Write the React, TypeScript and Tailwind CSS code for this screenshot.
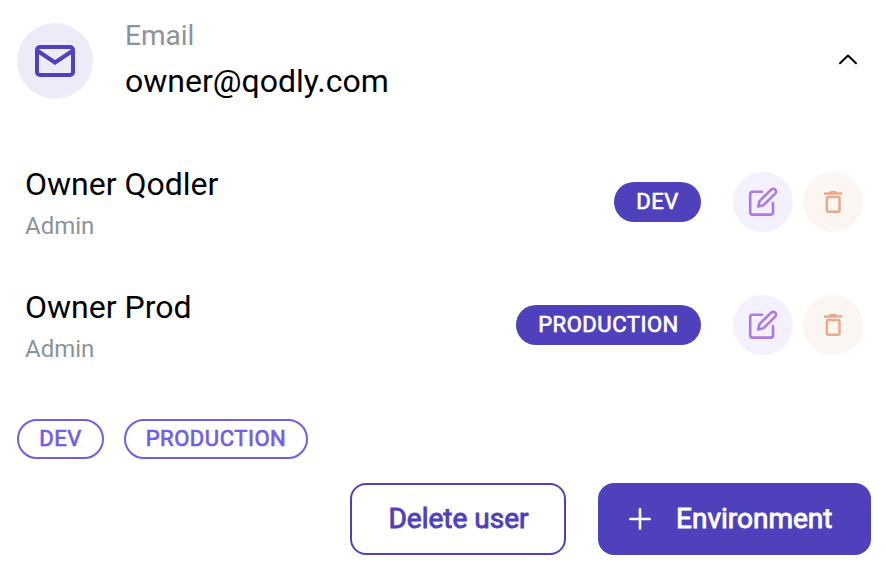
const Edit = () => (
  <div className="flex size-[60px] items-center justify-center rounded-full bg-[#f5f0fd]">
    <svg width="30" height="30" viewBox="0 0 30 30" fill="none" stroke="#ab7be0" strokeWidth="2.6" strokeLinecap="round" strokeLinejoin="round">
      <path d="M14 4.8H4.2A2 2 0 0 0 2.2 6.8V25.6A2 2 0 0 0 4.2 27.6H23A2 2 0 0 0 25 25.6V16" />
      <path d="M10.2 19.5L11.5 14.1L23.2 2.6A2.5 2.5 0 0 1 27.2 6.6L15.6 18.2Z" />
    </svg>
  </div>
);

const Trash = () => (
  <div className="flex size-[60px] items-center justify-center rounded-full bg-[#fcf6f2]">
    <svg width="24" height="24" viewBox="0 0 24 24" fill="none" stroke="#e8aa8e" strokeWidth="2.5" strokeLinejoin="round">
      <path d="M3 3.6H21M8.5 2.2H15.5" />
      <rect x="5.9" y="7.1" width="12.6" height="14.6" rx="1.2" />
    </svg>
  </div>
);

function Row({ name, env, pill }: { name: string; env: string; pill: string }) {
  return (
    <div className="flex h-[123px] items-start pl-[25px] pr-[23px]">
      <div className="flex-1">
        <div className="h-[38px] text-[32px] leading-[38px] text-black">{name}</div>
        <div className="mt-[9px] text-[24px] leading-[28px] text-[#8c939b]">Admin</div>
      </div>
      <div className="mt-[7px] flex items-center">
        <span className={`mr-[32px] flex h-10 items-center justify-center rounded-full bg-[#4f41bb] pb-[2px] text-[22px] tracking-[0.55px] text-white [-webkit-text-stroke:0.7px] ${pill}`}>{env}</span>
        <Edit />
        <div className="w-[10px]" />
        <Trash />
      </div>
    </div>
  );
}

export default function App() {
  return (
    <main className="flex h-[572px] w-[886px] flex-col overflow-hidden bg-white font-[Roboto,sans-serif]">
      <header className="flex h-[165px] items-start pl-[17px]">
        <div className="mt-[23px] flex size-[76px] items-center justify-center rounded-full bg-[#edebf8]">
          <svg width="40" height="32" viewBox="0 0 40 32" fill="none" stroke="#4f41bb" strokeWidth="4" strokeLinejoin="round">
            <rect x="2" y="2" width="36" height="28" rx="3" />
            <path d="M2 5.5L20 17.5L38 5.5" strokeLinejoin="miter" />
          </svg>
        </div>
        <div className="ml-[32px] flex-1">
          <div className="mt-[19px] text-[28px] leading-[34px] text-[#8c939b]">Email</div>
          <div className="mt-[9px] text-[32px] leading-[38px] text-black">owner@qodly.com</div>
        </div>
        <svg className="mr-[28px] mt-[53px]" width="20" height="13" viewBox="0 0 20 13" fill="none" stroke="#000" strokeWidth="2" strokeLinecap="round" strokeLinejoin="round">
          <path d="M2 10.2L10 2.5L18 10.2" />
        </svg>
      </header>
      <Row name="Owner Qodler" env="DEV" pill="w-[87px]" />
      <Row name="Owner Prod" env="PRODUCTION" pill="w-[185px]" />
      <div className="mt-[8px] flex gap-5 pl-[17px] text-[22px] tracking-[0.55px] text-[#735ce6] [-webkit-text-stroke:0.7px]">
        <span className="flex h-10 w-[87px] items-center justify-center rounded-full border-2 pb-[2px]">DEV</span>
        <span className="flex h-10 w-[184px] items-center justify-center rounded-full border-2 pb-[2px]">PRODUCTION</span>
      </div>
      <footer className="mt-[24px] flex justify-end gap-[32px] pr-[15px] text-[28px] [-webkit-text-stroke:0.9px]">
        <button className="h-[72px] w-[216px] rounded-[16px] border-2 border-[#4f41bb] pl-px text-[#4f41bb]">Delete user</button>
        <button className="flex h-[72px] w-[273px] items-center rounded-[16px] bg-[#4f41bb] pl-[31px] text-white">
          <svg width="22" height="22" viewBox="0 0 22 22" fill="none" stroke="currentColor" strokeWidth="2.6" strokeLinecap="round">
            <path d="M11 1.3V20.7M1.3 11H20.7" />
          </svg>
          <span className="ml-[25px]">Environment</span>
        </button>
      </footer>
    </main>
  );
}
